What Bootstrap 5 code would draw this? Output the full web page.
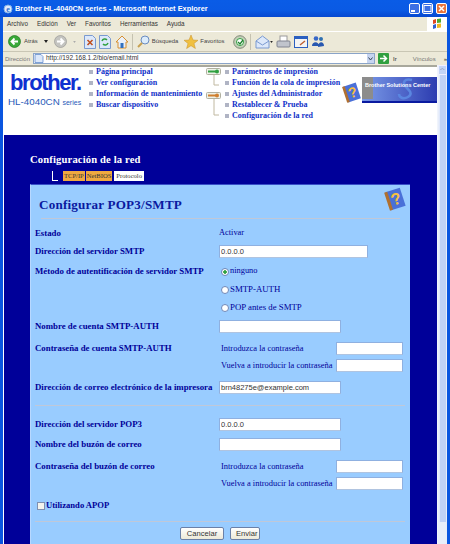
<!DOCTYPE html>
<html lang="es"><head><meta charset="utf-8"><title>Brother HL-4040CN series</title>
<link rel="stylesheet" href="https://cdn.jsdelivr.net/npm/bootstrap@5.3.0/dist/css/bootstrap.min.css">
<style>
html,body{margin:0;width:450px;height:544px;overflow:hidden;background:#0a56e0}
.win{width:450px;height:544px;font-family:"Liberation Sans",sans-serif;color:#222;font-size:8px;line-height:1}
.ttl{height:17px;background:linear-gradient(#0a5ce6,#0a5ae4 60%,#0648d0);color:#fff;font-weight:700;font-size:7.4px;padding:0 3px}
.ttl-t{margin-left:2px}
.wb{width:11px;height:11px;border:1px solid #fff;border-radius:2px;background:#3c6fe4;margin-left:2px}
.wb.rd{background:#e8743c;margin-left:3px}
.wbs{margin-left:auto}
.chrome{background:#ece9d8;margin:0 3px}
.mnu{height:14px;padding-left:4px;gap:9px;font-size:6.3px;color:#333}
.flg{margin-left:auto;width:20px;height:14px;background:#fff}
.tbr{height:21px;border-top:1px solid #fff;border-bottom:1px solid #c9c6b4;color:#444;font-size:5.9px}
.adr{height:13px;color:#777;font-size:6px}
.adl{margin-left:2px;width:25px}
.adb{width:344px;height:11px;margin-left:3px;background:#fff;border:1px solid #8aa4c8;color:#333;font-size:6.5px}
.adb b{font-weight:400;margin-left:2px}
.dd{margin-left:auto;width:7px;height:9px;background:#c6d4f0}
.page{height:479px;margin-left:3px;margin-right:3px;background:#fff}
.main{width:434px;min-width:434px}
.hdr{height:70px;background:#fff;border-top:2px solid #a8a89c}
.logo{width:86px;min-width:86px;padding:5px 0 0 5px}
.brd{font-size:22px;font-weight:700;color:#1030d0;letter-spacing:-1.4px;line-height:22px;height:22px;padding-left:2px}
.mdl{font-size:9.8px;color:#2a5ab8;margin-top:3px;white-space:nowrap;line-height:10px}
.mdl small{font-size:7px}
.nv{font-family:"Liberation Serif",serif;font-weight:700;font-size:8px;color:#1030c8;white-space:nowrap}
.nvc{width:117px;min-width:117px}
.nvd{width:136px;min-width:136px;margin-left:3px}
.nvi{height:10.8px;gap:3px}
.nvi i{display:block;width:4px;height:4px;background:#b0b4c4}
.tre{width:16px;min-width:16px;display:block}
.hlp1{display:block;margin-top:15px;margin-left:-19px;width:20px;height:21px;flex:none}
.bnr{width:75px;height:26px;margin-top:10px;flex:none;display:block}
.nav2{background:#000099;height:409px;padding-left:26px;border-left:1px solid #fff}
.sec{color:#fff;font-family:"Liberation Serif",serif;font-weight:700;font-size:10.6px;padding-top:19px;height:36px;line-height:12px;letter-spacing:.15px}
.tabs{height:13px;padding-left:22px}
.cnr{width:6px;height:10px;border-left:1px solid #fff;border-bottom:1px solid #fff;margin-right:5px}
.tb1{height:10px;font-family:"Liberation Serif",serif;font-size:6.6px;line-height:10px;padding:0 1px;background:#f0a840;color:#333;margin-right:1px}
.tb2{background:#fff;margin-left:1px;padding:0 2px}
.pnl{width:380px;height:360px;background:#99ccff;border-top:1px solid #3a50c8;border-left:1px solid #b8d8ff;color:#000099;font-family:"Liberation Serif",serif;position:relative;padding-left:4px}
.h2x{font-size:13.1px;font-weight:700;height:33px;padding:13px 0 0 4px;letter-spacing:.2px;line-height:14px;color:#0a1aa0}
.qic{position:absolute;right:3px;top:2px}
.rul{height:1px;background:#c0c8d8;margin-right:5px}
.rul1{margin:0 10px 0 6px}
.rw{height:13px;white-space:nowrap}
.g4{margin-top:4px}.g5{margin-top:5px}.g6{margin-top:6px}.g7{margin-top:7px}.g8{margin-top:8px}.g9{margin-top:9px}.g11{margin-top:11px}.g12{margin-top:12px}
.lb{width:184px;min-width:184px;font-weight:700;font-size:8.8px;margin-top:-1px}
.sb{width:117px;min-width:117px;font-size:8.45px;padding-left:2px}
.vl{font-size:8.8px}
.vl0{font-size:8.4px}
.fi.form-control{height:13px;min-height:13px;padding:0 1px;font-size:7.5px;line-height:1;border:1px solid #8fb0e0;border-radius:0;border-bottom-color:#b0c4e0;color:#333;font-family:"Liberation Sans",sans-serif}
.w149{width:149px}.w122{width:122px}.w67{width:67px}
.rdo.form-check-input{width:8px;height:8px;margin:0 1px 0 2px;border:1px solid #7088b8;background:#fff}
.rdo.form-check-input:checked{background:radial-gradient(circle,#30a040 0 1.5px,#fff 2px);border-color:#7088b8}
.chk.form-check-input{width:8px;height:8px;margin:0 1px 0 2px;border:1px solid #8090b0;border-radius:0;background:#f4f4ee}
.apop{font-size:8.6px;font-weight:700}
.acts{gap:6px;padding-left:145px}
.bt.btn{height:13px;padding:0 5px;font-size:7.6px;line-height:10px;border:1px solid #6a80a8;border-radius:2px;background:linear-gradient(#fff,#ece9d8);color:#333;font-family:"Liberation Sans",sans-serif}
.bt1.btn{width:44px}.bt2.btn{width:30px}
.scr{width:10px;min-width:10px;background:#e8eefa;border-left:1px solid #f0f4fc}
.sca{height:10px;background:#c2d4f6;border:1px solid #eef;font-size:5px;text-align:center;color:#345}
.sct{height:447px;background:#c0d2f6;margin:0 1px;border-left:1px solid #dfe8fb}
.ic{display:block;flex:none}
.m1{margin-left:5px}.m2{margin-left:3px}.m3{margin-left:6px}.m4{margin-left:8px}.m5{margin-left:4px}.m7{margin-left:2px}
.spt{width:1px;height:16px;background:#c5c2b0;flex:none}
.go{margin-left:3px}
.lnk{margin-left:16px}
</style></head><body>
<div class="win d-flex flex-column">
 <div class="ttl d-flex align-items-center">
  <svg class="ic" width="10" height="10" viewBox="0 0 10 10"><circle cx="5" cy="5" r="4" fill="#dfeafc" stroke="#7fb0e8"/><text x="5" y="8" font-size="8" font-family="Liberation Serif" font-weight="700" text-anchor="middle" fill="#2a6cd0">e</text></svg>
  <span class="ttl-t">Brother HL-4040CN series - Microsoft Internet Explorer</span>
  <span class="wbs d-flex">
   <span class="wb d-flex align-items-end"><svg width="9" height="9" viewBox="0 0 9 9"><rect x="1" y="6" width="4" height="2" fill="#fff"/></svg></span>
   <span class="wb"><svg class="ic" width="9" height="9" viewBox="0 0 9 9"><rect x="1" y="1.5" width="7" height="6" fill="none" stroke="#fff"/></svg></span>
   <span class="wb rd"><svg class="ic" width="9" height="9" viewBox="0 0 9 9"><path d="M2 2l5 5M7 2l-5 5" stroke="#fff" stroke-width="1.5"/></svg></span>
  </span>
 </div>
 <div class="chrome">
  <div class="mnu d-flex align-items-center">
   <span>Archivo</span><span>Edición</span><span>Ver</span><span>Favoritos</span><span>Herramientas</span><span>Ayuda</span>
   <span class="flg d-flex align-items-center justify-content-center"><svg class="ic" width="12" height="12" viewBox="0 0 12 12"><path d="M2 2l3-1v4l-3 1z" fill="#e04820"/><path d="M6 1l4-.5v4L6 5z" fill="#50a830"/><path d="M2 7l3-1v4l-3 1z" fill="#3060d0"/><path d="M6 6l4-.5v4L6 10z" fill="#f0b820"/></svg></span>
  </div>
  <div class="tbr d-flex align-items-center">
   <svg class="ic m1" width="13" height="13" viewBox="0 0 13 13"><circle cx="6.5" cy="6.5" r="6" fill="#3aa838" stroke="#1d7a20" stroke-width=".7"/><path d="M10 6.5H4M6.5 3.5l-3 3 3 3" fill="none" stroke="#fff" stroke-width="1.8"/></svg>
   <span class="m2">Atrás</span>
   <svg class="ic m3" width="4" height="3" viewBox="0 0 4 3"><path d="M0 0h4L2 3z" fill="#222"/></svg>
   <svg class="ic m3" width="13" height="13" viewBox="0 0 13 13"><circle cx="6.5" cy="6.5" r="6" fill="#c4c4c0" stroke="#9a9a96" stroke-width=".7"/><path d="M3 6.5h6M6.5 3.5l3 3-3 3" fill="none" stroke="#fff" stroke-width="1.8"/></svg>
   <svg class="ic m3" width="3" height="2" viewBox="0 0 4 3"><path d="M0 0h4L2 3z" fill="#aaa"/></svg>
   <svg class="ic m4" width="12" height="14" viewBox="0 0 12 14"><path d="M.5.5h8l3 3v10H.5z" fill="#dce8fa" stroke="#7a9ad0"/><path d="M3.5 5l5 5M8.5 5l-5 5" stroke="#c05020" stroke-width="1.6"/></svg>
   <svg class="ic m2" width="12" height="14" viewBox="0 0 12 14"><path d="M.5.5h8l3 3v10H.5z" fill="#dce8fa" stroke="#7a9ad0"/><path d="M3 6a3 3 0 0 1 5-1M9 8a3 3 0 0 1-5 1" fill="none" stroke="#30a040" stroke-width="1.5"/></svg>
   <svg class="ic m5" width="14" height="14" viewBox="0 0 14 14"><path d="M7 1L1 7h2v6h8V7h2z" fill="#e8f0fa" stroke="#d89030"/><rect x="5.5" y="8" width="3" height="5" fill="#3070c0"/></svg>
   <span class="spt m2"></span>
   <svg class="ic m5" width="13" height="13" viewBox="0 0 13 13"><circle cx="8" cy="5" r="4" fill="#dcecfb" stroke="#6a8cc0"/><path d="M5 8l-4 4" stroke="#c8a050" stroke-width="2"/></svg>
   <span class="m7">Búsqueda</span>
   <svg class="ic m3" width="14" height="14" viewBox="0 0 14 14"><path d="M7 0l2 5 5 .3-4 3.2 1.4 5L7 10.7 2.6 13.5 4 8.500 0 5.300 5 5z" fill="#f0c040" stroke="#c89028" stroke-width=".5"/></svg>
   <span class="m7">Favoritos</span>
   <svg class="ic m4" width="14" height="14" viewBox="0 0 14 14"><circle cx="7" cy="7" r="6.300" fill="#c4d0b8" stroke="#808878"/><circle cx="7" cy="7" r="3.500" fill="#fff" stroke="#30a040"/><path d="M5 7l2 2 3-4" fill="none" stroke="#208030" stroke-width="1.300"/></svg>
   <span class="spt m2"></span>
   <svg class="ic m5" width="15" height="14" viewBox="0 0 15 14"><path d="M1 6l6.500-5L14 6v7H1z" fill="#dce8fa" stroke="#7a9ad0"/><path d="M1 6l6.500 4L14 6" fill="none" stroke="#7a9ad0"/></svg>
   <svg class="ic" width="3" height="2" viewBox="0 0 4 3"><path d="M0 0h4L2 3z" fill="#222"/></svg>
   <svg class="ic m2" width="15" height="14" viewBox="0 0 15 14"><rect x="4" y="1" width="7" height="6" fill="#fff" stroke="#999"/><rect x="1" y="6" width="13" height="6" rx="1" fill="#c0c4cc" stroke="#808490"/></svg>
   <svg class="ic m2" width="14" height="12" viewBox="0 0 14 12"><rect x=".5" y=".5" width="13" height="11" fill="#f4f4f4" stroke="#2c60c0"/><rect x="1" y="1" width="12" height="2" fill="#2c60c0"/><path d="M6 9l5-4" stroke="#c06030" stroke-width="1.500"/></svg>
   <svg class="ic m2" width="14" height="13" viewBox="0 0 14 13"><circle cx="5" cy="3.500" r="2.300" fill="#3868c8"/><circle cx="10" cy="4" r="2" fill="#3070b0"/><path d="M1 11c0-5 7-5 7 0zM7 12c0-6 6-6 6-1z" fill="#2858b0"/></svg>
  </div>
  <div class="adr d-flex align-items-center">
   <span class="adl">Dirección</span>
   <span class="adb d-flex align-items-center">
    <svg class="ic" width="10" height="9" viewBox="0 0 10 9"><path d="M1 .5h6l2 2v6H1z" fill="#dce8fa" stroke="#5080c8" stroke-width=".7"/></svg>
    <b>http://192.168.1.2/bio/email.html</b>
    <span class="dd d-flex align-items-center justify-content-center"><svg width="5" height="4" viewBox="0 0 5 4"><path d="M.5.500L2.500 3 4.500.500" fill="none" stroke="#345" stroke-width="1"/></svg></span>
   </span>
   <svg class="ic go" width="11" height="11" viewBox="0 0 11 11"><rect width="11" height="11" rx="1" fill="#30a040"/><path d="M2 5.500h6M5.500 2.500l3 3-3 3" fill="none" stroke="#fff" stroke-width="1.500"/></svg>
   <span class="ms-1 text-dark">Ir</span>
   <span class="lnk">Vínculos</span>
   <span class="ms-2 text-dark">»</span>
  </div>
 </div>
 <div class="page d-flex">
  <div class="main">
   <div class="hdr d-flex">
    <div class="logo">
     <div class="brd">brother.</div>
     <div class="mdl">HL-4040CN <small>series</small></div>
    </div>
    <div class="nv nvc">
     <div class="nvi d-flex align-items-center"><i></i>Página principal</div>
     <div class="nvi d-flex align-items-center"><i></i>Ver configuración</div>
     <div class="nvi d-flex align-items-center"><i></i>Información de mantenimiento</div>
     <div class="nvi d-flex align-items-center"><i></i>Buscar dispositivo</div>
    </div>
    <svg class="tre" height="52" viewBox="0 0 16 52"><rect x=".5" y="1.500" width="14" height="6" rx="1" fill="#eef2e8" stroke="#b0b0a0"/><path d="M2 4.500h9" stroke="#30a040" stroke-width="2"/><circle cx="11" cy="4.500" r="2" fill="#30a040"/><path d="M8 8v10h5" fill="none" stroke="#c0b8a0"/><rect x=".5" y="25.500" width="14" height="6" rx="1" fill="#eef2e8" stroke="#b0b0a0"/><path d="M2 28.500h9" stroke="#d08030" stroke-width="2"/><circle cx="11" cy="28.500" r="2" fill="#d08030"/><path d="M8 32v16h5" fill="none" stroke="#c0b8a0"/></svg>
    <div class="nv nvd">
     <div class="nvi d-flex align-items-center"><i></i>Parámetros de impresión</div>
     <div class="nvi d-flex align-items-center"><i></i>Función de la cola de impresión</div>
     <div class="nvi d-flex align-items-center"><i></i>Ajustes del Administrador</div>
     <div class="nvi d-flex align-items-center"><i></i>Restablecer &amp; Prueba</div>
     <div class="nvi d-flex align-items-center"><i></i>Configuración de la red</div>
    </div>
    <svg class="hlp1" viewBox="0 0 18 19"><g transform="rotate(-18 9 9.500)"><rect x="3" y="2" width="12" height="15" fill="#4a70d8"/><rect x="2" y="2" width="2.500" height="15" fill="#b07030"/><text x="9.500" y="14" font-size="13" font-weight="700" font-family="Liberation Sans" text-anchor="middle" fill="#f8c040">?</text></g></svg>
    <svg class="bnr" viewBox="0 0 75 26"><defs><linearGradient id="bg" x1="0" x2="1"><stop offset="0" stop-color="#7a9ae8"/><stop offset="1" stop-color="#2c3cb0"/></linearGradient></defs><rect width="75" height="24" fill="url(#bg)"/><rect width="11" height="22" fill="#8c8c8c"/><rect y="24" width="75" height="2" fill="#0a1aa0"/><path d="M50 3c-8-2-10 3-6 7s7 7 2 10-9 0-9-3" fill="none" stroke="#5a86e0" stroke-width="2.500"/><text x="3" y="10" font-size="5.500" font-weight="700" font-family="Liberation Sans" fill="#fff">Brother Solutions Center</text></svg>
   </div>
   <div class="nav2">
    <div class="sec">Configuración de la red</div>
    <div class="tabs d-flex">
     <span class="cnr"></span><span class="tb1">TCP/IP</span><span class="tb1">NetBIOS</span><span class="tb1 tb2">Protocolo</span>
    </div>
    <div class="pnl">
     <div class="h2x">Configurar POP3/SMTP</div>
     <svg class="qic" width="23" height="24" viewBox="0 0 18 19"><g transform="rotate(-18 9 9.500)"><rect x="3" y="2" width="12" height="15" fill="#4a70d8"/><rect x="2" y="2" width="2.500" height="15" fill="#b07030"/><text x="9.500" y="14" font-size="13" font-weight="700" font-family="Liberation Sans" text-anchor="middle" fill="#f8c040">?</text></g></svg>
     <div class="rul rul1"></div>
     <div class="rw d-flex align-items-center g8"><div class="lb">Estado</div><div class="vl0">Activar</div></div>
     <div class="rw d-flex align-items-center g5"><div class="lb">Dirección del servidor SMTP</div><input class="form-control fi w149" value="0.0.0.0"></div>
     <div class="rw d-flex align-items-center g7"><div class="lb">Método de autentificación de servidor SMTP</div><input class="form-check-input rdo" type="radio" name="a" checked><span class="vl0">ninguno</span></div>
     <div class="rw d-flex align-items-center g5"><div class="lb"></div><input class="form-check-input rdo" type="radio" name="a"><span class="vl">SMTP-AUTH</span></div>
     <div class="rw d-flex align-items-center g5"><div class="lb"></div><input class="form-check-input rdo" type="radio" name="a"><span class="vl">POP antes de SMTP</span></div>
     <div class="rw d-flex align-items-center g6"><div class="lb">Nombre de cuenta SMTP-AUTH</div><input class="form-control fi w122"></div>
     <div class="rw d-flex align-items-center g9"><div class="lb">Contraseña de cuenta SMTP-AUTH</div><div class="sb">Introduzca la contraseña</div><input class="form-control fi w67" type="password"></div>
     <div class="rw d-flex align-items-center g4"><div class="lb"></div><div class="sb">Vuelva a introducir la contraseña</div><input class="form-control fi w67" type="password"></div>
     <div class="rw d-flex align-items-center g9"><div class="lb">Dirección de correo electrónico de la impresora</div><input class="form-control fi w122" value="brn48275e@example.com"></div>
     <div class="rul g11"></div>
     <div class="rw d-flex align-items-center g12"><div class="lb">Dirección del servidor POP3</div><input class="form-control fi w122" value="0.0.0.0"></div>
     <div class="rw d-flex align-items-center g7"><div class="lb">Nombre del buzón de correo</div><input class="form-control fi w122"></div>
     <div class="rw d-flex align-items-center g9"><div class="lb">Contraseña del buzón de correo</div><div class="sb">Introduzca la contraseña</div><input class="form-control fi w67" type="password"></div>
     <div class="rw d-flex align-items-center g4"><div class="lb"></div><div class="sb">Vuelva a introducir la contraseña</div><input class="form-control fi w67" type="password"></div>
     <div class="rw d-flex align-items-center g9"><input class="form-check-input chk" type="checkbox"><span class="apop">Utilizando APOP</span></div>
     <div class="rul g9"></div>
     <div class="acts d-flex g5"><button class="btn bt bt1">Cancelar</button><button class="btn bt bt2">Enviar</button></div>
    </div>
   </div>
  </div>
  <div class="scr">
   <div class="sca">︿</div>
   <div class="sct"></div>
  </div>
 </div>
</div>
<script src="https://cdn.jsdelivr.net/npm/bootstrap@5.3.0/dist/js/bootstrap.bundle.min.js"></script>
</body></html>
